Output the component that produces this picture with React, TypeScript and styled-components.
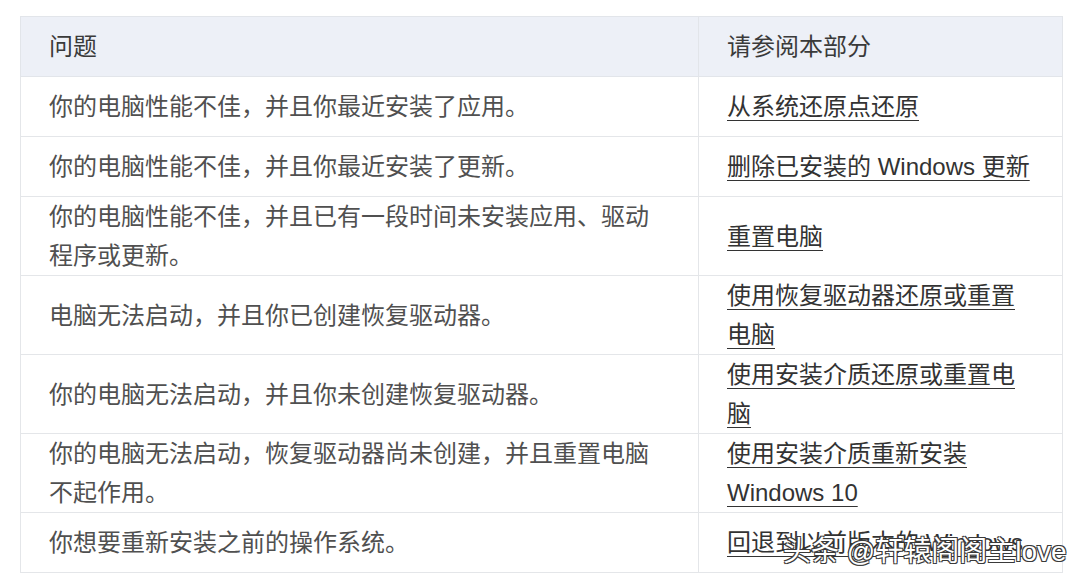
import React from 'react';
import styled, { createGlobalStyle } from 'styled-components';

const GlobalStyle = createGlobalStyle`
  html, body {
    margin: 0;
    padding: 0;
    background: #ffffff;
  }
  body {
    font-family: "Liberation Sans", "Noto Sans CJK SC", sans-serif;
  }
`;

const Page = styled.div`
  position: relative;
  width: 1080px;
  height: 587px;
  padding: 16px 18px 0 20px;
  box-sizing: border-box;
  overflow: hidden;
`;

const Table = styled.table`
  width: 1042px;
  border-collapse: collapse;
  table-layout: fixed;
  font-size: 24px;
  line-height: 39px;
  color: #505050;
`;

const HeadCell = styled.th<{ $w: number }>`
  box-sizing: border-box;
  width: ${p => p.$w}px;
  height: 60px;
  padding: 0 28px;
  text-align: left;
  font-weight: normal;
  color: #3a3a3a;
  background: #edf0f7;
  border: 1px solid #e2e5ea;
  vertical-align: middle;
`;

const Cell = styled.td`
  box-sizing: border-box;
  height: 60px;
  padding: 0 28px;
  border: 1px solid #e4e6e9;
  vertical-align: middle;
  word-break: normal;
  overflow-wrap: break-word;
`;

const Link = styled.a`
  color: #333333;
  text-decoration: underline;
  text-decoration-thickness: 1px;
  text-underline-offset: 5px;
  cursor: pointer;
`;

const Watermark = styled.div`
  position: absolute;
  left: 783px;
  top: 532px;
  font-size: 28px;
  line-height: 40px;
  color: #ffffff;
  white-space: nowrap;
  text-shadow:
    1px 1px 0 #3a3a3a,
    -1px -1px 0 #3a3a3a,
    1px -1px 0 #3a3a3a,
    -1px 1px 0 #3a3a3a;
`;

const rows: [string, string][] = [
  ['你的电脑性能不佳，并且你最近安装了应用。', '从系统还原点还原'],
  ['你的电脑性能不佳，并且你最近安装了更新。', '删除已安装的 Windows 更新'],
  ['你的电脑性能不佳，并且已有一段时间未安装应用、驱动程序或更新。', '重置电脑'],
  ['电脑无法启动，并且你已创建恢复驱动器。', '使用恢复驱动器还原或重置电脑'],
  ['你的电脑无法启动，并且你未创建恢复驱动器。', '使用安装介质还原或重置电脑'],
  ['你的电脑无法启动，恢复驱动器尚未创建，并且重置电脑不起作用。', '使用安装介质重新安装 Windows 10'],
  ['你想要重新安装之前的操作系统。', '回退到以前版本的 Windows'],
];

export default function App() {
  return (
    <Page>
      <GlobalStyle />
      <Table>
        <thead>
          <tr>
            <HeadCell $w={678}>问题</HeadCell>
            <HeadCell $w={364}>请参阅本部分</HeadCell>
          </tr>
        </thead>
        <tbody>
          {rows.map(([problem, section]) => (
            <tr key={problem}>
              <Cell>{problem}</Cell>
              <Cell>
                <Link>{section}</Link>
              </Cell>
            </tr>
          ))}
        </tbody>
      </Table>
      <Watermark>头条 @轩辕阁阁主love</Watermark>
    </Page>
  );
}
